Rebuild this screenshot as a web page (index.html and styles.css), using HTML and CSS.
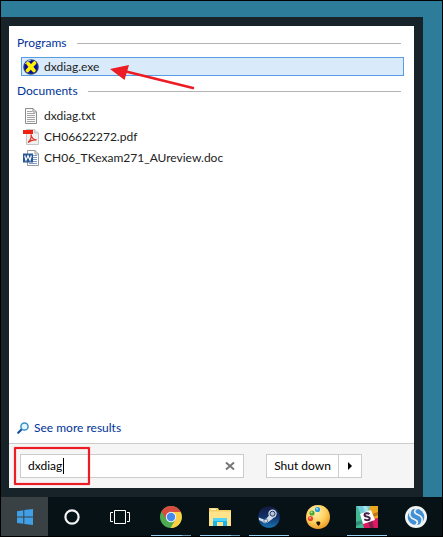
FILE: index.html
```html
<!DOCTYPE html>
<html lang="en">
<head>
<meta charset="utf-8">
<title>Start menu</title>
<link rel="stylesheet" href="styles.css">
</head>
<body>
<div class="desktop">
  <main class="menu">
    <div class="panel">
      <section class="results">
        <h2 class="heading">Programs</h2>
        <ul class="list">
          <li><a class="item selected" href="#">
            <svg class="icon" viewBox="0 0 16 16"><defs><radialGradient id="dx"><stop offset="0" stop-color="#1616c8"/><stop offset=".7" stop-color="#0a0a96"/><stop offset="1" stop-color="#33556e"/></radialGradient></defs><circle cx="8" cy="8" r="7.8" fill="url(#dx)"/><path d="M2 5Q4 1 8 1.200" stroke="#9fd0ee" fill="none"/><path d="M5 4.500 11 11.500M11.500 4 4.500 11.500" stroke="#fff200" stroke-width="3.600" stroke-linecap="round"/></svg>
            dxdiag.exe</a></li>
        </ul>
        <h2 class="heading">Documents</h2>
        <ul class="list">
          <li><a class="item" href="#">
            <svg class="icon" viewBox="0 0 16 16"><path d="M2.500.500H10L13.500 4v11.500h-11z" fill="#fafafa" stroke="#8c8c8c"/><path d="M10 .500V4h3.500" fill="none" stroke="#8c8c8c"/><path d="M4 3.500h5M4 5.500h8M4 7.500h8M4 9.500h8M4 11.500h8M4 13.500h8" stroke="#a4a4a4"/></svg>
            dxdiag.txt</a></li>
          <li><a class="item" href="#">
            <svg class="icon" viewBox="0 0 16 16"><path d="M3.500.500h8L15.500 4v11.500h-12z" fill="#f1f1f1" stroke="#c6c6c6"/><path d="M11.500.500V4h4" fill="#ddd" stroke="#c6c6c6"/><path d="M0 1h10v4H0z" fill="#ee2112"/><path d="M8 5.500c.5 3 2 5 5.500 5.500-3-.7-6 .3-8.500 2.500 2-2 4-5 3-8z" fill="none" stroke="#df3527" stroke-width="1.300"/></svg>
            CH06622272.pdf</a></li>
          <li><a class="item" href="#">
            <svg class="icon" viewBox="0 0 16 16"><path d="M4.500.500H12L15.500 4v11.500h-11z" fill="#fff" stroke="#999"/><path d="M12 .500V4h3.500" fill="none" stroke="#999"/><path d="M10 5.500h4M10 7.500h4M10 9.500h4M10 11.500h4M6 13.500h8" stroke="#7d9cc6"/><path d="M0 3.500h10v9H0z" fill="#285695"/><path d="M1.700 5.500 3 10.300l2-4.500 2 4.500 1.300-4.800" fill="none" stroke="#fff" stroke-width="1.200"/></svg>
            CH06_TKexam271_AUreview.doc</a></li>
        </ul>
        <svg class="arrow" viewBox="0 0 86 24"><path d="M14 5 83 22" stroke="#ed1c24" stroke-width="2.500" stroke-linecap="round"/><path d="M0 3 19-1 14.500 14z" fill="#ed1c24"/></svg>
      </section>
      <a class="more" href="#">
        <svg class="more-icon" viewBox="0 0 12 12"><path d="M5 7 1.200 10.800" stroke="#17519e" stroke-width="2.200" stroke-linecap="round"/><circle cx="7.500" cy="4.500" r="3.600" fill="#e5f5fd" stroke="#378fc8" stroke-width="1.500"/></svg>
        See more results</a>
      <footer class="footer">
        <div class="search">
          <input class="field" type="text" value="dxdiag" aria-label="Search programs and files">
          <span class="caret"></span>
          <button class="clear" aria-label="Clear search"><svg viewBox="0 0 8 8"><path d="M0 .500 8 7.500M8 .500 0 7.500" stroke="#777" stroke-width="2"/></svg></button>
          <span class="callout"></span>
        </div>
        <div class="power">
          <button class="shut">Shut down</button>
          <button class="options" aria-label="Power options"><svg viewBox="0 0 4 8"><path d="M0 0 4 4 0 8z"/></svg></button>
        </div>
      </footer>
    </div>
  </main>
  <nav class="taskbar">
    <button class="task start" aria-label="Start"><svg class="glyph" viewBox="0 0 16 16"><path d="M0 2.200 6.300 1.200V7.400H0zM7.300 1.100 16 0v7.400H7.300zM0 8.500h6.300v6.300L0 13.900zM7.300 8.500H16V16l-8.700-1.100z" fill="#419fe8"/></svg></button>
    <button class="task" aria-label="Cortana"><svg class="glyph" viewBox="0 0 16 16"><circle cx="8" cy="8" r="6.600" fill="none" stroke="#f4f4f4" stroke-width="2.200"/></svg></button>
    <button class="task" aria-label="Task view"><svg class="taskview" viewBox="0 0 20 14"><path d="M4.500.500h11v13h-11zM3 2.500H.500v9H3M17 2.500h2.500v9H17" fill="none" stroke="#fff"/></svg></button>
    <div class="apps">
      <button class="task open stacked" aria-label="Chrome"><svg class="app" viewBox="0 0 22 22"><circle cx="11" cy="11" r="11" fill="#4daa53"/><path d="M1.500 5.500A11 11 0 0 1 20.500 5.500L21 6H11L6 13z" fill="#d84b3f"/><path d="M20.600 6A11 11 0 0 1 10.500 22L15.500 13.500 11 6z" fill="#ffcf43"/><circle cx="11" cy="11" r="5.200" fill="#f4f4f4"/><circle cx="11" cy="11" r="4.200" fill="#4688f1"/></svg></button>
      <button class="task open stacked" aria-label="File Explorer"><svg class="app" viewBox="0 0 22 22"><path d="M0 2h9l1 2h12v16H0z" fill="#f4cd65"/><path d="M2 2.700h5v1H2z" fill="#fff"/><path d="M0 5.500h22V20H0z" fill="#ffe38b"/><path d="M4 12h14v8h-4v-4H8v4H4z" fill="#16b5ee"/><path d="M4 12h14v3H4z" fill="#50d3fb"/></svg></button>
      <button class="task open" aria-label="Steam"><svg class="app" viewBox="0 0 22 22"><defs><linearGradient id="st" x2="0" y2="1"><stop stop-color="#15183e"/><stop offset=".5" stop-color="#12316a"/><stop offset="1" stop-color="#1675b5"/></linearGradient></defs><circle cx="11" cy="11" r="10.800" fill="url(#st)"/><path d="M.8 11.500 7 14l5-5.500 3 4-5.500 4a3 3 0 0 1-4.500-.5L1 14z" fill="#d6dde8"/><circle cx="14.500" cy="7.700" r="4.200" fill="#d6dde8"/><circle cx="14.500" cy="7.700" r="2.500" fill="#b7c4d6" stroke="#183564"/><circle cx="7.800" cy="14.800" r="1.900" fill="none" stroke="#4d6e9b" stroke-width=".800"/></svg></button>
      <button class="task" aria-label="Paint"><svg class="app large" viewBox="0 0 24 24"><defs><radialGradient id="pa" cx=".4" cy=".3" r=".7"><stop stop-color="#fff0b5"/><stop offset=".6" stop-color="#ffd05d"/><stop offset="1" stop-color="#ef9d29"/></radialGradient></defs><path d="M12 0C19 0 24 5 24 12s-5 12-12 12S0 19 0 12.500C0 5 5 0 12 0z" fill="url(#pa)"/><circle cx="11.500" cy="4.500" r="2.600" fill="#279bd9"/><circle cx="11" cy="3.800" r="1" fill="#a8e6ff"/><circle cx="6" cy="8" r="2.600" fill="#4ba92d"/><circle cx="5.500" cy="7.300" r="1" fill="#bae493"/><circle cx="4.500" cy="13.500" r="2.600" fill="#ed4431"/><circle cx="4" cy="12.800" r="1" fill="#ffac97"/><path d="M10.300 17c2-1 4.500-.5 4 1.500l-1.500 2.500c-1-1-2.700-1.500-2.500-4z" fill="#211407"/></svg></button>
      <button class="task open" aria-label="Slack"><svg class="app" viewBox="0 0 22 22"><path d="M0 0h22v22H0z" fill="#3eb991"/><path d="M1 0h13l2 5-11 4z" fill="#70cadb"/><path d="M7 0h4l2 6-4 1z" fill="#a4e2e8"/><path d="M14 0h8v13l-5 2-4-10z" fill="#e9a820"/><path d="M16 8l6-2v3l-5 2z" fill="#b9761b"/><path d="m6 17 11-4 5-1v10H8z" fill="#e01765"/><path d="m12 15 4-1 2 8h-4z" fill="#852050"/><path d="m0 12 5-2 3 12H0z" fill="#3eb991"/><path d="m0 16 7-2 1 3-8 3z" fill="#318b7a"/><path d="m4 8 11-4 4 10-12 4z" fill="#fff"/><path d="M13.500 8c-2-1.300-5-.9-5 .9 0 2.300 5.200 1.200 5.200 3.500 0 2-3.500 2.300-5.400.9" fill="none" stroke="#442047" stroke-width="2"/></svg></button>
      <button class="task" aria-label="Simplenote"><svg class="app" viewBox="0 0 22 22"><circle cx="11" cy="11" r="11" fill="#f1f3f4"/><circle cx="11" cy="11" r="8.300" fill="#4390d5"/><path d="M13.500 2C8.500 3.500 8.500 7 12.500 8.500 17 10.200 18.500 13 16 18M8.500 20C13.500 18.500 13.500 15 9.500 13.500 5 11.800 3.500 9 6 4" fill="none" stroke="#f1f3f4" stroke-width="1.600"/></svg></button>
    </div>
  </nav>
</div>
</body>
</html>
```
FILE: styles.css
```css
* { box-sizing: border-box; }

body {
  margin: 0;
  font: 12px/16px Lato, "Open Sans", sans-serif;
  color: #222;
}

button, input { font: inherit; color: inherit; border-radius: 0; }
button { padding: 0; border: 0; background: none; }
a { color: inherit; text-decoration: none; }
svg { display: block; flex: none; overflow: visible; }

.desktop {
  display: flex;
  flex-direction: column;
  min-height: 100vh;
  border: 1px solid #000;
  background: #2d7d9a;
}

.menu {
  display: flex;
  flex: 1;
  margin: 16px 19px 0 0;
  padding: 9px 9px 9px 8px;
  background: #172329;
}

.panel {
  display: flex;
  flex: 1;
  flex-direction: column;
  background: #fff;
}

.results { position: relative; flex: 1; padding: 9px 10px 0 8px; }

.heading {
  display: flex;
  align-items: center;
  gap: 10px;
  margin: 0 3px 6px 0;
  font-size: 12px;
  font-weight: 400;
  color: #003399;
}
.heading::after { content: ""; flex: 1; height: 1px; background: #b4b4b4; }

.list { margin: 0 0 7px 4px; padding: 0; list-style: none; }

.item {
  display: flex;
  align-items: center;
  gap: 5px;
  height: 21px;
  padding-left: 2px;
}
.selected {
  height: 19px;
  padding-left: 1px;
  border: 1px solid #569de5;
  background: #d9eafb;
}
.icon { width: 16px; height: 16px; }

.arrow { position: absolute; left: 101px; top: 40px; width: 86px; height: 24px; }

.more {
  display: flex;
  align-items: center;
  align-self: flex-start;
  gap: 5px;
  margin: 0 8px 7px;
  color: #003399;
}
.more-icon { width: 12px; height: 12px; }

.footer {
  display: flex;
  gap: 22px;
  padding: 10px 52px 10px 11px;
  border-top: 1px solid #ccc;
  background: #f5f5f5;
}

.search {
  position: relative;
  display: flex;
  flex: 1;
  height: 24px;
  border: 1px solid #ccc;
  background: #fff;
}
.field {
  flex: 1;
  min-width: 0;
  padding: 0 0 0 7px;
  border: 0;
  outline: 0;
  background: none;
  color: #000;
}
.caret { position: absolute; left: 42px; top: 3px; width: 1px; height: 16px; background: #000; }
.clear { display: grid; place-items: center; width: 26px; }
.clear svg { width: 8px; height: 8px; }
.callout {
  position: absolute;
  left: -7px;
  top: -8px;
  width: 76px;
  height: 38px;
  border: 2px solid #ed1c24;
  border-radius: 1px;
  box-shadow: 0 0 1px #ed1c24, inset 0 0 1px #ed1c24;
  pointer-events: none;
}

.power { display: flex; height: 24px; border: 1px solid #ccc; background: #fff; }
.shut { width: 71px; color: #000; }
.options { display: grid; place-items: center; width: 23px; border-left: 1px solid #ccc; }
.options svg { width: 4px; height: 8px; }

.taskbar { display: flex; height: 39px; background: #071216; }
.task {
  display: flex;
  align-items: center;
  justify-content: center;
  width: 48px;
  height: 39px;
}
.start { width: 47px; background: #3a4144; }
.glyph { width: 16px; height: 16px; }
.taskview { width: 20px; height: 14px; }
.apps { display: flex; gap: 1px; margin-left: 3px; }
.app { width: 22px; height: 22px; }
.large { width: 24px; height: 24px; }
.open {
  background: linear-gradient(#99d1f5, #99d1f5) center bottom / 40px 1px no-repeat;
}
.stacked {
  background-image: linear-gradient(to right, #99d1f5 31px, #6f9cb8 31px);
}
```
